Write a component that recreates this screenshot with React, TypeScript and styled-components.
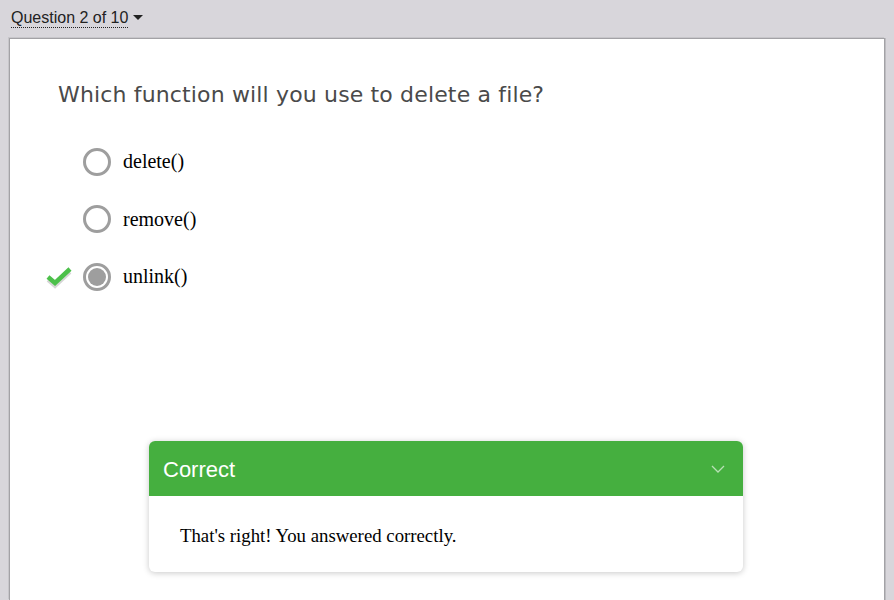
import React from "react";
import styled, { createGlobalStyle } from "styled-components";

const GlobalStyle = createGlobalStyle`
  html, body {
    margin: 0;
    padding: 0;
    background: #d8d6db;
    overflow: hidden;
  }
`;

const Page = styled.div`
  width: 894px;
  height: 600px;
  display: flex;
  flex-direction: column;
  box-sizing: border-box;
  padding: 0 9px 0 9px;
`;

const TopBar = styled.div`
  height: 38px;
  display: flex;
  align-items: flex-start;
  padding-top: 9px;
  box-sizing: border-box;
  padding-left: 2px;
`;

const QuestionPicker = styled.div`
  font-family: "Liberation Sans", Arial, sans-serif;
  font-size: 16px;
  color: #222;
  display: flex;
  align-items: center;
  gap: 5px;
  cursor: pointer;

  span {
    border-bottom: 1px dotted #222;
    line-height: 18px;
  }
`;

const Caret = styled.div`
  width: 0;
  height: 0;
  border-left: 5px solid transparent;
  border-right: 5px solid transparent;
  border-top: 5px solid #222;
  margin-top: -2px;
`;

const Panel = styled.div`
  flex: 1;
  background: #fff;
  border: 1px solid #a3a2a6;
  border-bottom: none;
  box-shadow: -1px -1px 0 #c7c6ca, 1px 0 0 #bdbcc0;
  position: relative;
  display: flex;
  flex-direction: column;
`;

const Question = styled.h2`
  margin: 43px 0 0 48px;
  font-family: "DejaVu Sans", Verdana, sans-serif;
  font-weight: normal;
  font-size: 22px;
  color: #4a4a4a;
  letter-spacing: 0.15px;
`;

const Options = styled.div`
  margin-top: 40px;
  display: flex;
  flex-direction: column;
  gap: 28.5px;
`;

const Option = styled.label`
  display: flex;
  align-items: center;
  height: 29px;
  font-family: "Liberation Serif", "Times New Roman", serif;
  font-size: 20px;
  color: #000;
`;

const Mark = styled.div`
  width: 37px;
  margin-left: 36px;
  display: flex;
  align-items: center;
`;

const Radio = styled.div<{ $checked?: boolean }>`
  width: 28px;
  height: 28px;
  box-sizing: border-box;
  border-radius: 50%;
  border: 3px solid #9e9e9e;
  display: flex;
  align-items: center;
  justify-content: center;
  margin-right: 12px;

  &::after {
    content: "";
    width: 18px;
    height: 18px;
    border-radius: 50%;
    background: ${(p) => (p.$checked ? "#9e9e9e" : "transparent")};
  }
`;

const FeedbackWrap = styled.div`
  margin-top: auto;
  display: flex;
  padding-left: 139px;
  padding-bottom: 28px;
`;

const Feedback = styled.div`
  width: 594px;
  border-radius: 6px;
  overflow: hidden;
  background: #fff;
  box-shadow: 0 1px 6px rgba(0, 0, 0, 0.22);
`;

const FeedbackHead = styled.div`
  height: 55px;
  background: #45af3f;
  display: flex;
  align-items: center;
  justify-content: space-between;
  padding: 2px 18px 0 14px;
  box-sizing: border-box;
  font-family: "Liberation Sans", Arial, sans-serif;
  font-size: 22px;
  color: #fff;
`;

const FeedbackBody = styled.div`
  height: 76px;
  display: flex;
  align-items: center;
  padding: 4px 0 0 31px;
  box-sizing: border-box;
  font-family: "Liberation Serif", "Times New Roman", serif;
  font-size: 18.8px;
  color: #000;
`;

const Check = () => (
  <svg width="26" height="24" viewBox="0 0 26 24">
    <path d="M2 13 L9 19 L24 5" fill="none" stroke="#d6d6d6" strokeWidth="4" transform="translate(0,2)" />
    <path d="M2 12 L9 18 L24 4" fill="none" stroke="#4cc04a" strokeWidth="4.5" strokeLinejoin="miter" />
  </svg>
);

const Chevron = () => (
  <svg width="14" height="9" viewBox="0 0 14 9">
    <path d="M1 1 L7 7 L13 1" fill="none" stroke="#b8e0b5" strokeWidth="1.3" />
  </svg>
);

const options = [
  { label: "delete()", checked: false, correct: false },
  { label: "remove()", checked: false, correct: false },
  { label: "unlink()", checked: true, correct: true },
];

export default function App() {
  return (
    <>
      <GlobalStyle />
      <Page>
        <TopBar>
          <QuestionPicker>
            <span>Question 2 of 10</span>
            <Caret />
          </QuestionPicker>
        </TopBar>
        <Panel>
          <Question>Which function will you use to delete a file?</Question>
          <Options>
            {options.map((o) => (
              <Option key={o.label}>
                <Mark>{o.correct && <Check />}</Mark>
                <Radio $checked={o.checked} />
                {o.label}
              </Option>
            ))}
          </Options>
          <FeedbackWrap>
            <Feedback>
              <FeedbackHead>
                Correct
                <Chevron />
              </FeedbackHead>
              <FeedbackBody>That's right! You answered correctly.</FeedbackBody>
            </Feedback>
          </FeedbackWrap>
        </Panel>
      </Page>
    </>
  );
}
